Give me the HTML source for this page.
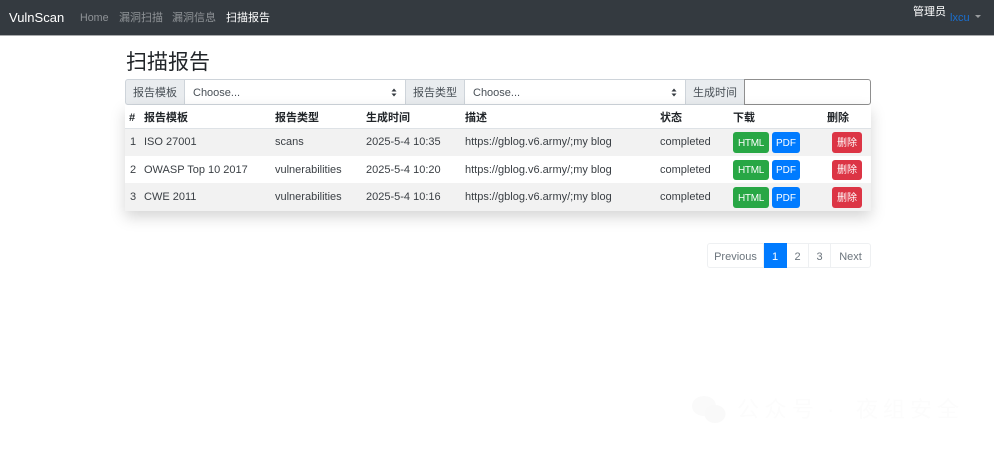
<!DOCTYPE html>
<html lang="zh"><head><meta charset="utf-8"><title>VulnScan</title>
<style>
html,body{margin:0;padding:0;background:#fff}
body{width:994px;height:450px;overflow:hidden;position:relative;font-family:"Liberation Sans","Noto Sans CJK SC",sans-serif;font-size:11px;color:#212529}
.a{position:absolute;white-space:nowrap}
.nav{left:0;top:0;width:994px;height:35px;background:#343a40;border-bottom:1px solid #a9abad;box-sizing:content-box}
.n{color:#8f9397;top:11px;font-size:11px;line-height:15px}
.lab{background:#e9ecef;border:1px solid #ced4da;box-sizing:border-box;height:26px;top:79px;line-height:26px;color:#495057;text-align:center;font-size:11px}
.sel{background:#fff;border:1px solid #ced4da;border-left:0;border-right:0;box-sizing:border-box;height:26px;top:79px;line-height:26px;color:#495057;padding-left:8px;font-size:11px}
.ar{top:88px}
.row{left:125px;width:746px}
.th{top:111px;font-weight:bold;line-height:14px;font-size:11px;color:#212529}
.td{line-height:14px;color:#3a3f44;font-size:11px}
.b{color:#fff;border-radius:3px;text-align:center;font-size:10px}
.h{letter-spacing:-.3px}
.g{background:#28a745}.p{background:#007bff}.r{background:#dc3545}
.pg{top:243px;height:25px;box-sizing:border-box;border:1px solid #eef0f2;border-left:0;line-height:27px;text-align:center;color:#6c757d;font-size:11px;background:#fff}
</style></head><body>
<div class="a nav"></div>
<div class="a" style="left:9px;top:9px;font-size:13px;line-height:18px;color:#fff">VulnScan</div>
<div class="a n" style="left:80px;font-size:10.7px">Home</div>
<div class="a n" style="left:119px">漏洞扫描</div>
<div class="a n" style="left:172px">漏洞信息</div>
<div class="a n" style="left:226px;color:#fff">扫描报告</div>
<div class="a" style="left:913px;top:5px;font-size:11px;line-height:15px;color:#fff">管理员</div>
<div class="a" style="left:950px;top:11px;font-size:11px;line-height:15px;color:#1a6fd0">lxcu</div>
<div class="a" style="left:975px;top:15px;width:0;height:0;border:3.5px solid transparent;border-top-color:#9a9da0;border-bottom:0"></div>

<div class="a" style="left:126px;top:48px;font-size:21px;line-height:30px;color:#212529">扫描报告</div>

<div class="a lab" style="left:125px;width:60px;border-radius:3px 0 0 3px">报告模板</div>
<div class="a sel" style="left:185px;width:220px">Choose...</div>
<svg class="a ar" style="left:391px" width="6" height="9" viewBox="0 0 6 9"><path d="M3 0.5L5.5 3.5H0.5ZM3 8.5L0.5 5.5H5.5Z" fill="#343a40"/></svg>
<div class="a lab" style="left:405px;width:60px">报告类型</div>
<div class="a sel" style="left:465px;width:220px">Choose...</div>
<svg class="a ar" style="left:671px" width="6" height="9" viewBox="0 0 6 9"><path d="M3 0.5L5.5 3.5H0.5ZM3 8.5L0.5 5.5H5.5Z" fill="#343a40"/></svg>
<div class="a lab" style="left:685px;width:60px">生成时间</div>
<div class="a" style="left:744px;top:79px;width:127px;height:26px;box-sizing:border-box;border:1px solid #8f8f8f;border-radius:0 3px 3px 0;background:#fff"></div>

<div class="a row" style="top:105px;height:106px;background:#fff;box-shadow:0 6px 14px rgba(0,0,0,.17)"></div>
<div class="a row" style="top:128px;height:28px;background:#f2f2f2;border-top:1px solid #dee2e6;box-sizing:border-box"></div>
<div class="a row" style="top:183px;height:28px;background:#f2f2f2"></div>

<div class="a th" style="left:129px">#</div>
<div class="a th" style="left:144px">报告模板</div>
<div class="a th" style="left:275px">报告类型</div>
<div class="a th" style="left:366px">生成时间</div>
<div class="a th" style="left:465px">描述</div>
<div class="a th" style="left:660px">状态</div>
<div class="a th" style="left:733px">下载</div>
<div class="a th" style="left:827px">删除</div>

<div class="a td" style="left:130px;top:135px">1</div>
<div class="a td" style="left:144px;top:135px">ISO 27001</div>
<div class="a td" style="left:275px;top:135px">scans</div>
<div class="a td" style="left:366px;top:135px">2025-5-4 10:35</div>
<div class="a td" style="left:465px;top:135px">https://gblog.v6.army/;my blog</div>
<div class="a td" style="left:660px;top:135px">completed</div>
<div class="a b g h" style="left:733px;top:132px;width:36px;height:21px;line-height:23px">HTML</div>
<div class="a b p" style="left:772px;top:132px;width:28px;height:21px;line-height:23px">PDF</div>
<div class="a b r" style="left:832px;top:132px;width:30px;height:21px;line-height:23px">删除</div>

<div class="a td" style="left:130px;top:163px">2</div>
<div class="a td" style="left:144px;top:163px">OWASP Top 10 2017</div>
<div class="a td" style="left:275px;top:163px">vulnerabilities</div>
<div class="a td" style="left:366px;top:163px">2025-5-4 10:20</div>
<div class="a td" style="left:465px;top:163px">https://gblog.v6.army/;my blog</div>
<div class="a td" style="left:660px;top:163px">completed</div>
<div class="a b g h" style="left:733px;top:160px;width:36px;height:20px;line-height:22px">HTML</div>
<div class="a b p" style="left:772px;top:160px;width:28px;height:20px;line-height:22px">PDF</div>
<div class="a b r" style="left:832px;top:160px;width:30px;height:20px;line-height:22px">删除</div>

<div class="a td" style="left:130px;top:190px">3</div>
<div class="a td" style="left:144px;top:190px">CWE 2011</div>
<div class="a td" style="left:275px;top:190px">vulnerabilities</div>
<div class="a td" style="left:366px;top:190px">2025-5-4 10:16</div>
<div class="a td" style="left:465px;top:190px">https://gblog.v6.army/;my blog</div>
<div class="a td" style="left:660px;top:190px">completed</div>
<div class="a b g h" style="left:733px;top:187px;width:36px;height:21px;line-height:23px">HTML</div>
<div class="a b p" style="left:772px;top:187px;width:28px;height:21px;line-height:23px">PDF</div>
<div class="a b r" style="left:832px;top:187px;width:30px;height:21px;line-height:23px">删除</div>

<div class="a pg" style="left:707px;width:57px;border-left:1px solid #eef0f2;border-radius:3px 0 0 3px">Previous</div>
<div class="a pg" style="left:764px;width:23px;background:#007bff;border-color:#007bff;color:#fff">1</div>
<div class="a pg" style="left:787px;width:22px">2</div>
<div class="a pg" style="left:809px;width:22px">3</div>
<div class="a pg" style="left:831px;width:40px;border-radius:0 3px 3px 0">Next</div>

<svg class="a" style="left:691px;top:394px" width="36" height="30" viewBox="0 0 36 30"><ellipse cx="13" cy="12" rx="12" ry="10" fill="#fafafa"/><ellipse cx="24" cy="20" rx="10.5" ry="9" fill="#f9f9f9"/></svg>
<div class="a" style="left:737px;top:396px;font-size:22px;line-height:28px;letter-spacing:5.5px;color:#fcfcfc">公众号</div>
<div class="a" style="left:827px;top:396px;font-size:22px;line-height:28px;color:#fcfcfc">·</div>
<div class="a" style="left:856px;top:396px;font-size:22px;line-height:28px;letter-spacing:5px;color:#fcfcfc">夜组安全</div>
</body></html>
